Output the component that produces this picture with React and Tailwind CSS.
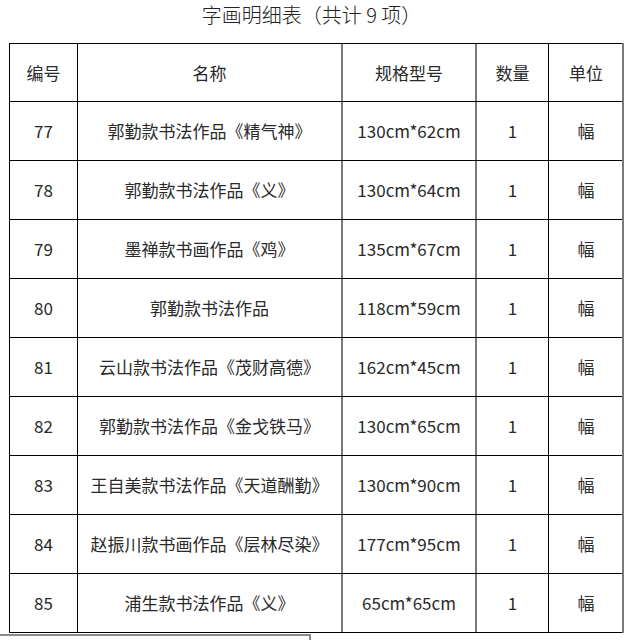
import React from 'react';

const rows = [
  { no: '77', name: '郭勤款书法作品《精气神》', size: '130cm*62cm', qty: '1', unit: '幅' },
  { no: '78', name: '郭勤款书法作品《义》', size: '130cm*64cm', qty: '1', unit: '幅' },
  { no: '79', name: '墨禅款书画作品《鸡》', size: '135cm*67cm', qty: '1', unit: '幅' },
  { no: '80', name: '郭勤款书法作品', size: '118cm*59cm', qty: '1', unit: '幅' },
  { no: '81', name: '云山款书法作品《茂财高德》', size: '162cm*45cm', qty: '1', unit: '幅' },
  { no: '82', name: '郭勤款书法作品《金戈铁马》', size: '130cm*65cm', qty: '1', unit: '幅' },
  { no: '83', name: '王自美款书法作品《天道酬勤》', size: '130cm*90cm', qty: '1', unit: '幅' },
  { no: '84', name: '赵振川款书画作品《层林尽染》', size: '177cm*95cm', qty: '1', unit: '幅' },
  { no: '85', name: '浦生款书法作品《义》', size: '65cm*65cm', qty: '1', unit: '幅' },
];

const font = { fontFamily: '"Noto Sans CJK SC", "Liberation Sans", sans-serif' };

function Row({ cells, first }) {
  return (
    <div
      className={`grid grid-cols-[68px_265px_134px_72px_74px] h-[59px] border-b border-black ${
        first ? 'border-t' : ''
      }`}
    >
      <div className="flex items-center justify-center border-r border-black">{cells[0]}</div>
      <div className="flex items-center justify-center border-r-2 border-[#7a7a7a]">{cells[1]}</div>
      <div className="flex items-center justify-center border-r-2 border-[#7a7a7a]">{cells[2]}</div>
      <div className="flex items-center justify-center border-r border-black">{cells[3]}</div>
      <div className="flex items-center justify-center">{cells[4]}</div>
    </div>
  );
}

export default function App() {
  return (
    <div className="w-[631px] h-[640px] bg-white overflow-hidden text-[#2a2a2a]" style={font}>
      <div className="w-[623px] h-[43px] text-center text-[20px] leading-[30px] font-light text-[#222]">
        字画明细表（共计 9 项）
      </div>
      <div className="ml-[9px] w-[615px] border-l border-black border-r-2 border-r-[#7a7a7a] text-[17px]">
        <Row first cells={['编号', '名称', '规格型号', '数量', '单位']} />
        {rows.map((r) => (
          <Row key={r.no} cells={[r.no, r.name, r.size, r.qty, r.unit]} />
        ))}
      </div>
      <div className="w-[311px] h-[6px] mt-px border-t-2 border-r-2 border-[#8a8a8a]" />
    </div>
  );
}
